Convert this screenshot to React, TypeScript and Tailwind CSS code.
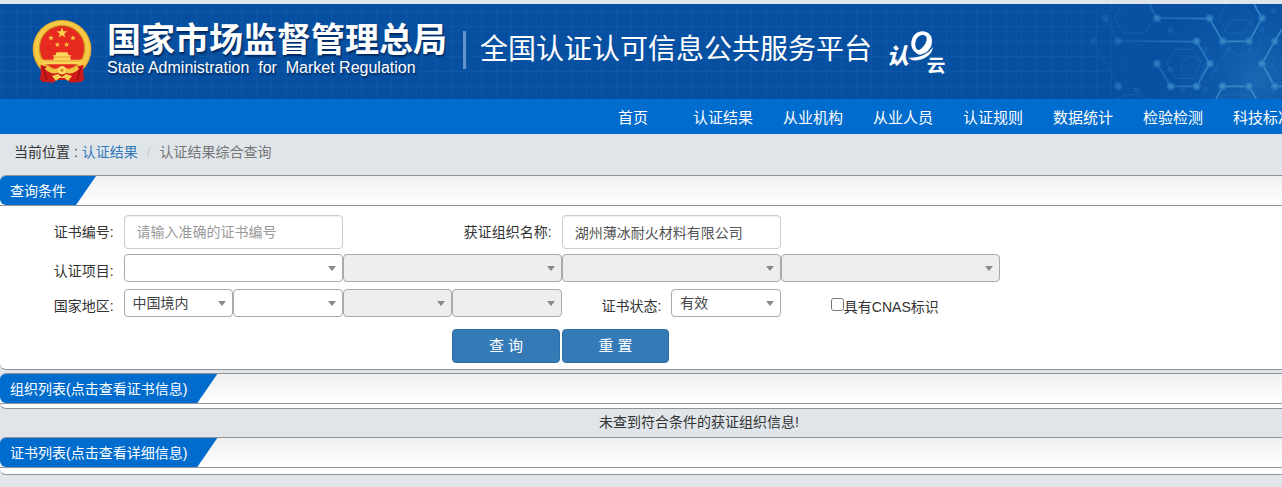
import React from "react";
import clsx from "clsx";

const NAV_ITEMS = [
  "首页",
  "认证结果",
  "从业机构",
  "从业人员",
  "认证规则",
  "数据统计",
  "检验检测",
  "科技标准",
];

function starPoints(cx: number, cy: number, r: number) {
  return Array.from({ length: 10 }, (_, i) => {
    const radius = i % 2 === 0 ? r : r * 0.4;
    const angle = (Math.PI / 5) * i - Math.PI / 2;
    return `${cx + radius * Math.cos(angle)},${cy + radius * Math.sin(angle)}`;
  }).join(" ");
}

function Emblem() {
  return (
    <svg viewBox="22 30 180 192" className="h-16 w-[60px] shrink-0" aria-hidden="true">
      <circle cx="112" cy="118" r="88" fill="#e9ae2c" />
      <circle cx="112" cy="117" r="77" fill="none" stroke="#f5c845" strokeWidth="14" />
      <circle cx="112" cy="114" r="69" fill="#c98a1c" />
      <circle cx="112" cy="114" r="66" fill="#e62a20" />
      <polygon points={starPoints(112, 69, 17)} fill="#fbd44b" />
      <polygon points={starPoints(79, 84, 9)} fill="#fbc93f" />
      <polygon points={starPoints(145, 84, 9)} fill="#fbc93f" />
      <polygon points={starPoints(98, 104, 9)} fill="#fbc93f" />
      <polygon points={starPoints(126, 104, 9)} fill="#fbc93f" />
      <path d="M96 127h32l4 9h8l-3 4v9h35l-5 14H57l-5-14h35v-9l-3-4h8z" fill="#fbd65a" />
      <path d="M88 141h49M58 153h108" stroke="#d98a1c" strokeWidth="2" />
      <path d="M48 164l24 8 18 10 22-6 22 6 18-10 24-8 0 34 4 6-8 11-34 3-10-8h-32l-10 8-34-3-8-11 4-6z" fill="#cf1a1c" />
      <path d="M56 172l10 38M168 172l-10 38" stroke="#981014" strokeWidth="4" />
      <path d="M70 168q18 18 42-1 24 19 42 1l10 8q-20 20-40 12-12 10-24 0-20 8-40-12z" fill="#f4c344" />
      <circle cx="112" cy="181" r="12" fill="#fbdc68" />
      <circle cx="112" cy="181" r="5" fill="#d98a1c" />
      <path d="M82 198l18-6 12 9 12-9 18 6-12 15-10-9h-16l-10 9z" fill="#f8cf50" />
    </svg>
  );
}

function CloudLogo() {
  return (
    <svg viewBox="0 0 198 135" className="h-[45px] w-[66px] shrink-0 overflow-visible" aria-label="认e云" fill="#fff">
      <text x="2" y="98" fontSize="66" fontStyle="italic" fontWeight="900" fontFamily="'Noto Sans CJK SC', sans-serif">
        认
      </text>
      <path
        fillRule="evenodd"
        d="M92 66C70 56 70 16 96 4c20-9 42 2 42 26 0 23-16 38-36 41-5 0-9-2-10-5M112 12c-16-2-26 16-24 32 1 9 8 16 15 11 12-9 20-23 19-34-1-5-5-8-10-9z"
      />
      <path d="M66 80c30 2 60-8 75-32-3 27-32 42-62 40z" />
      <text x="122" y="122" fontSize="56" fontWeight="700" fontFamily="'Noto Sans CJK SC', sans-serif">
        云
      </text>
    </svg>
  );
}

// Molecule lines fading in towards the right edge of the banner
function MoleculeArt() {
  const nodes = [
    [376, 43, 0.25], [531, 43, 0.7], [689, 43, 0.8], [846, 43, 0.8],
    [340, 112, 0.2], [415, 112, 0.4], [650, 112, 0.8], [728, 112, 0.8], [807, 112, 0.8], [884, 112, 0.8],
    [531, 179, 0.7], [689, 179, 0.9], [846, 179, 1],
    [415, 247, 0.5], [572, 247, 0.8], [650, 247, 0.9], [728, 247, 1], [807, 247, 1], [884, 247, 1],
  ];
  const faint = [
    [571, 79], [676, 138], [744, 138], [812, 138], [846, 79], [880, 21],
    [571, 197], [710, 197], [608, 257], [676, 257], [880, 257], [470, 257],
  ];
  return (
    <svg viewBox="0 0 906 285" className="absolute top-0 right-0 h-full w-[302px]" aria-hidden="true">
      <defs>
        <radialGradient id="glow" cx="830" cy="225" r="300" gradientUnits="userSpaceOnUse">
          <stop offset="0" stopColor="#1a6cb5" stopOpacity="0.9" />
          <stop offset="1" stopColor="#0a52a5" stopOpacity="0" />
        </radialGradient>
        <linearGradient id="cover" x1="380" x2="470" gradientUnits="userSpaceOnUse">
          <stop offset="0" stopColor="#0950a3" stopOpacity="0" />
          <stop offset="1" stopColor="#0950a3" />
        </linearGradient>
        <linearGradient id="fade" x1="330" x2="720" gradientUnits="userSpaceOnUse">
          <stop offset="0" stopColor="#2389d4" stopOpacity="0.1" />
          <stop offset="1" stopColor="#4fa3d6" stopOpacity="0.6" />
        </linearGradient>
      </defs>
      <rect x="380" width="526" height="285" fill="url(#cover)" />
      <rect width="906" height="285" fill="url(#glow)" />
      <g fill="none" stroke="#3b8ccb" strokeWidth="3" opacity="0.25">
        <path d="M742-3h50l26 46-26 44h-50l-26-44zM586 136h50l26 43-26 44h-50l-26-44zM900 136l-26 43 26 44" />
        <path d="M620 160h36l18 32-18 32h-36l-18-32zM728 92l26-44h52l38 64-20 40h-60zM430-3l-28 46 28 44h66l26-44M716 285l16-13h70l16 13M690 223l24-44 26-38M410 285l20-13h50l16 13" />
      </g>
      <g fill="none" stroke="url(#fade)" strokeWidth="5">
        <path d="M508 0l23 43M531 42l158 2 39 68h79l39-69-24-43" />
        <path d="M415 111l235 2 39 66-39 68h-78l-41-68" />
        <path d="M906 75l-22 37-38 67 38 68h22M708 285l20-38h79l22 38" />
        <path d="M400 0l-24 43 39 69M340 112l75 135" strokeWidth="3" />
      </g>
      {nodes.map(([x, y, o]) => (
        <g key={`${x}-${y}`} opacity={o}>
          <circle cx={x} cy={y} r="12" fill="#2277c0" />
          <circle cx={x} cy={y} r="7" fill="#4088c6" />
        </g>
      ))}
      {faint.map(([x, y]) => (
        <circle key={`${x}-${y}`} cx={x} cy={y} r="9" fill="#1c6ebb" opacity="0.4" />
      ))}
    </svg>
  );
}

function Panel({ title, children }: { title: string; children: React.ReactNode }) {
  return (
    <section className="rounded-l-md border-y border-[#909396] bg-white overflow-hidden">
      <div className="h-[30px] border-b border-[#909396] bg-linear-to-b from-[#f0f0f0] to-white flex">
        <h2 className="bg-[#006cce] text-white pl-2.5 pr-[30px] leading-[30px] rounded-bl-md [clip-path:polygon(0_0,100%_0,calc(100%-20px)_100%,0_100%)]">
          {title}
        </h2>
      </div>
      {children}
    </section>
  );
}

interface SelectProps {
  label: string;
  id?: string;
  options?: string[];
  disabled?: boolean;
  className?: string;
}

function Select({ label, id, options = [""], disabled, className }: SelectProps) {
  return (
    <div className={clsx("relative h-7", className)}>
      <select
        id={id}
        aria-label={label}
        disabled={disabled}
        className="appearance-none block w-full h-full rounded border border-[#aaa] bg-white pl-2 pr-5 text-[#444] disabled:bg-[#eee] disabled:opacity-100"
      >
        {options.map((o) => (
          <option key={o}>{o}</option>
        ))}
      </select>
      <span className="pointer-events-none absolute right-[7px] top-3 border-x-4 border-t-5 border-x-transparent border-t-[#888]" />
    </div>
  );
}

const labelClass = "text-right pr-2.5 leading-7";
const inputClass =
  "col-span-2 h-[34px] w-full rounded border border-[#ccc] bg-white px-3 text-[#555] placeholder:text-[#999] shadow-[inset_0_1px_1px_rgba(0,0,0,0.075)]";
const buttonClass =
  "h-[34px] rounded border border-[#2e6da4] bg-[#337ab7] text-[15px] text-white";

export default function App() {
  return (
    <div className="min-h-screen overflow-hidden bg-[#e0e5e9] pt-1 text-sm leading-5 text-[#333] font-['Liberation_Sans','Noto_Sans_CJK_SC',sans-serif]">
      <header className="relative h-[95px] overflow-hidden bg-[#0750a1] bg-[linear-gradient(#0c57a8_1px,transparent_1px),linear-gradient(90deg,#0c57a8_1px,transparent_1px)] bg-size-[15px_15px] bg-position-[1px_7px]">
        <MoleculeArt />
        <div className="relative flex h-full items-center pl-8 pb-1 text-white whitespace-nowrap">
          <div className="pt-1">
            <Emblem />
          </div>
          <div className="ml-[15px] text-shadow-[1px_2px_2px_#00285f]">
            <div className="text-[34px] leading-9 font-bold">国家市场监督管理总局</div>
            <div className="text-base leading-5">State Administration&nbsp; for &nbsp;Market Regulation</div>
          </div>
          <div className="ml-4 h-[38px] w-[3px] bg-[#6592c8]" />
          <h1 className="ml-3.5 text-[28px] leading-9">全国认证认可信息公共服务平台</h1>
          <div className="ml-3.5 pt-2">
            <CloudLogo />
          </div>
        </div>
      </header>

      <nav className="flex h-[35px] bg-[#006cce] pl-[588px] text-[15px]">
        {NAV_ITEMS.map((item) => (
          <a key={item} href="#" className="w-[90px] shrink-0 text-center leading-[38px] text-white">
            {item}
          </a>
        ))}
      </nav>

      <div className="flex h-[41px] items-center pl-3.5 pb-1.5">
        <span>当前位置 :&nbsp;</span>
        <a href="#" className="text-[#337ab7]">认证结果</a>
        <span className="px-[9px] text-[#ccc]">/</span>
        <span className="text-[#777]">认证结果综合查询</span>
      </div>

      <main className="flex flex-col">
        <Panel title="查询条件">
          <form className="pt-[9px] pb-1.5 pl-3.5 pr-[22%]" onSubmit={(e) => e.preventDefault()}>
            <div className="grid grid-cols-9 items-center">
              <label htmlFor="certNo" className={labelClass}>证书编号:</label>
              <input id="certNo" type="text" placeholder="请输入准确的证书编号" className={inputClass} />
              <label htmlFor="orgName" className={clsx(labelClass, "col-start-5")}>获证组织名称:</label>
              <input id="orgName" type="text" defaultValue="湖州薄冰耐火材料有限公司" className={inputClass} />
            </div>

            <div className="mt-[5px] grid h-7 grid-cols-9">
              <label htmlFor="project" className={clsx(labelClass, "pt-[3px]")}>认证项目:</label>
              <Select id="project" label="认证项目" className="col-span-2" />
              <Select label="认证项目 2" disabled className="col-span-2" />
              <Select label="认证项目 3" disabled className="col-span-2" />
              <Select label="认证项目 4" disabled className="col-span-2" />
            </div>

            <div className="mt-[7px] grid h-7 grid-cols-9">
              <label htmlFor="country" className={clsx(labelClass, "pt-[3px]")}>国家地区:</label>
              <Select id="country" label="国家地区" options={["中国境内", "中国境外"]} />
              <Select label="省" />
              <Select label="市" disabled />
              <Select label="区县" disabled />
              <label htmlFor="status" className={clsx(labelClass, "pt-[3px]")}>证书状态:</label>
              <Select id="status" label="证书状态" options={["有效", "暂停", "撤销"]} />
              <div className="col-span-2 flex items-center pl-[50px] pt-1">
                <input id="cnas" type="checkbox" className="mb-1 size-[13px]" />
                <label htmlFor="cnas">具有CNAS标识</label>
              </div>
            </div>

            <div className="mt-3 grid grid-cols-9">
              <button type="submit" className={clsx(buttonClass, "col-start-5 mr-0.5")}>查 询</button>
              <button type="reset" className={clsx(buttonClass, "mr-0.5")}>重 置</button>
            </div>
          </form>
        </Panel>

        <div className="mt-[3px]">
          <Panel title="组织列表(点击查看证书信息)">
            <div className="h-1" />
          </Panel>
        </div>
        <p className="h-7 pl-[116px] text-center leading-[26px]">未查到符合条件的获证组织信息!</p>
        <Panel title="证书列表(点击查看详细信息)">
          <div className="h-1.5" />
        </Panel>
      </main>
    </div>
  );
}
